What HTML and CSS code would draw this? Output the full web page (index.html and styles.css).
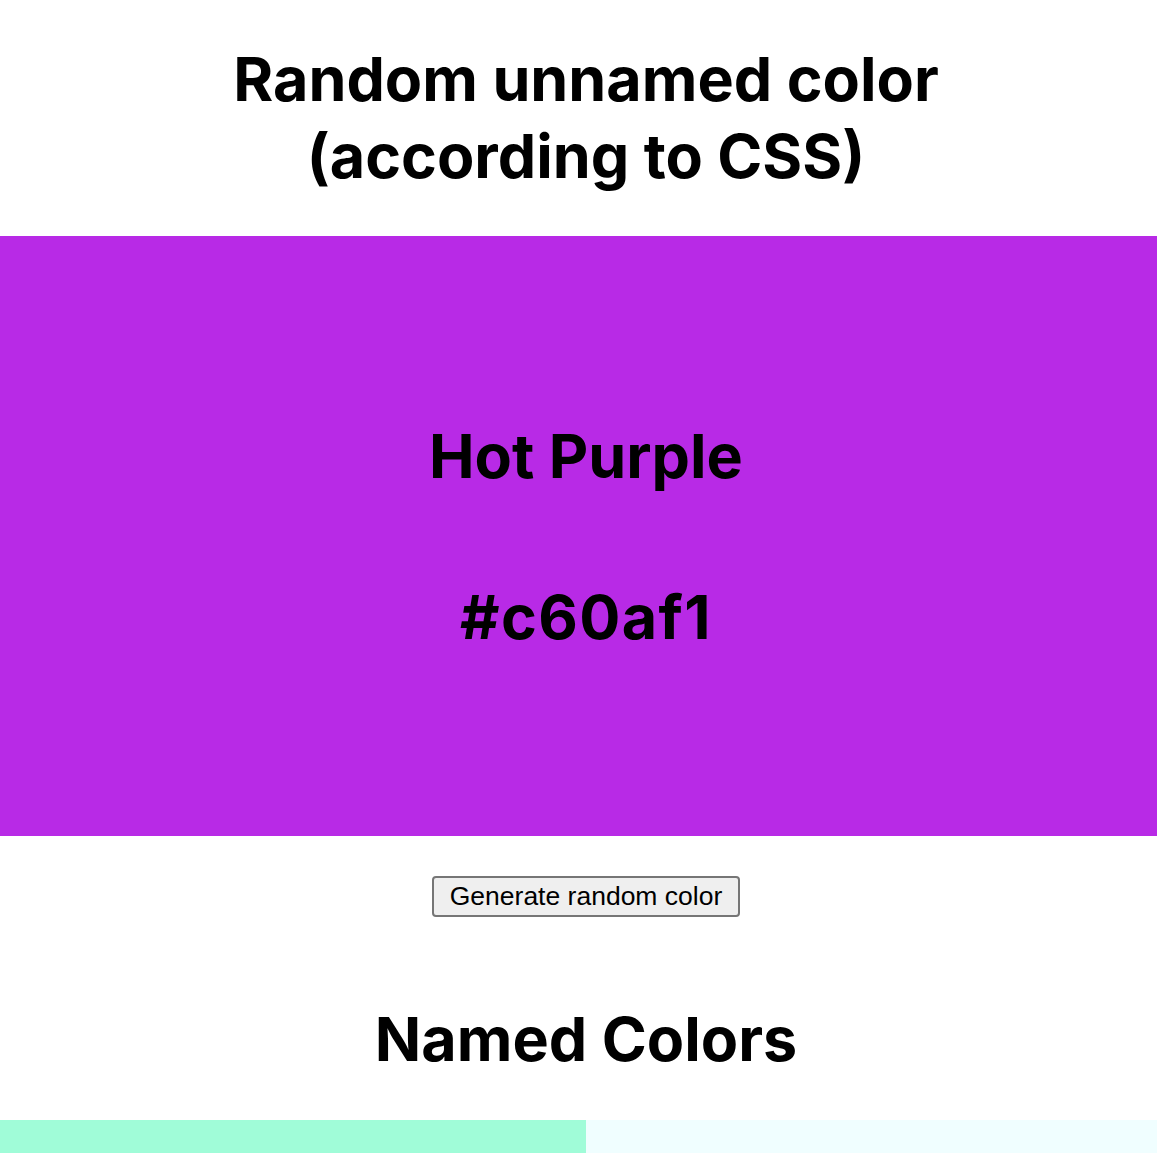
FILE: index.html
```html
<!DOCTYPE html>
<html lang="en">
<head>
<meta charset="utf-8">
<title>Random unnamed color</title>
<link rel="stylesheet" href="styles.css">
</head>
<body>
<main class="page">
  <h1 class="title">Random unnamed color<br>(according to CSS)</h1>
  <section class="swatch">
    <h2 class="swatch-name">Hot Purple</h2>
    <h2 class="swatch-hex">#c60af1</h2>
  </section>
  <div class="actions">
    <button class="generate" type="button">Generate random color</button>
  </div>
  <h2 class="section-title">Named Colors</h2>
  <div class="named-grid">
    <div class="named-cell cell-aquamarine"></div>
    <div class="named-cell cell-azure"></div>
  </div>
</main>
</body>
</html>
```

FILE: styles.css
```css
html, body {
  margin: 0;
  padding: 0;
  background: #ffffff;
}

html {
  overflow: hidden;
}

.page {
  width: 1172px;
  font-family: Inter, "Noto Sans", sans-serif;
  color: #000;
  display: flex;
  flex-direction: column;
  align-items: stretch;
}

.title {
  margin: 41px 0 0;
  font-size: 61px;
  font-weight: 700;
  line-height: 77px;
  text-align: center;
  height: 158px;
}

.swatch {
  margin-top: 37px;
  height: 600px;
  background: #b82ae6;
  display: flex;
  flex-direction: column;
  align-items: center;
  justify-content: center;
  gap: 89px;
}

.swatch h2 {
  margin: 0;
  font-size: 61px;
  font-weight: 700;
  line-height: 72px;
}

.swatch-hex {
  letter-spacing: 1.4px;
}

.actions {
  display: flex;
  justify-content: center;
  padding-top: 40px;
}

.generate {
  font-family: "Liberation Sans", Arial, sans-serif;
  font-size: 26.5px;
  color: #000;
  background: #efefef;
  border: 2px solid #767676;
  border-radius: 4px;
  padding: 3px 16px;
  line-height: 31px;
  height: 41px;
}

.section-title {
  margin: 0;
  padding-top: 86px;
  font-size: 61px;
  font-weight: 700;
  line-height: 72px;
  text-align: center;
}

.named-grid {
  margin-top: 45px;
  display: grid;
  grid-template-columns: 1fr 1fr;
}

.named-cell {
  height: 120px;
}

.cell-aquamarine { background: #a0fcd8; }
.cell-azure { background: #f0feff; }
```
